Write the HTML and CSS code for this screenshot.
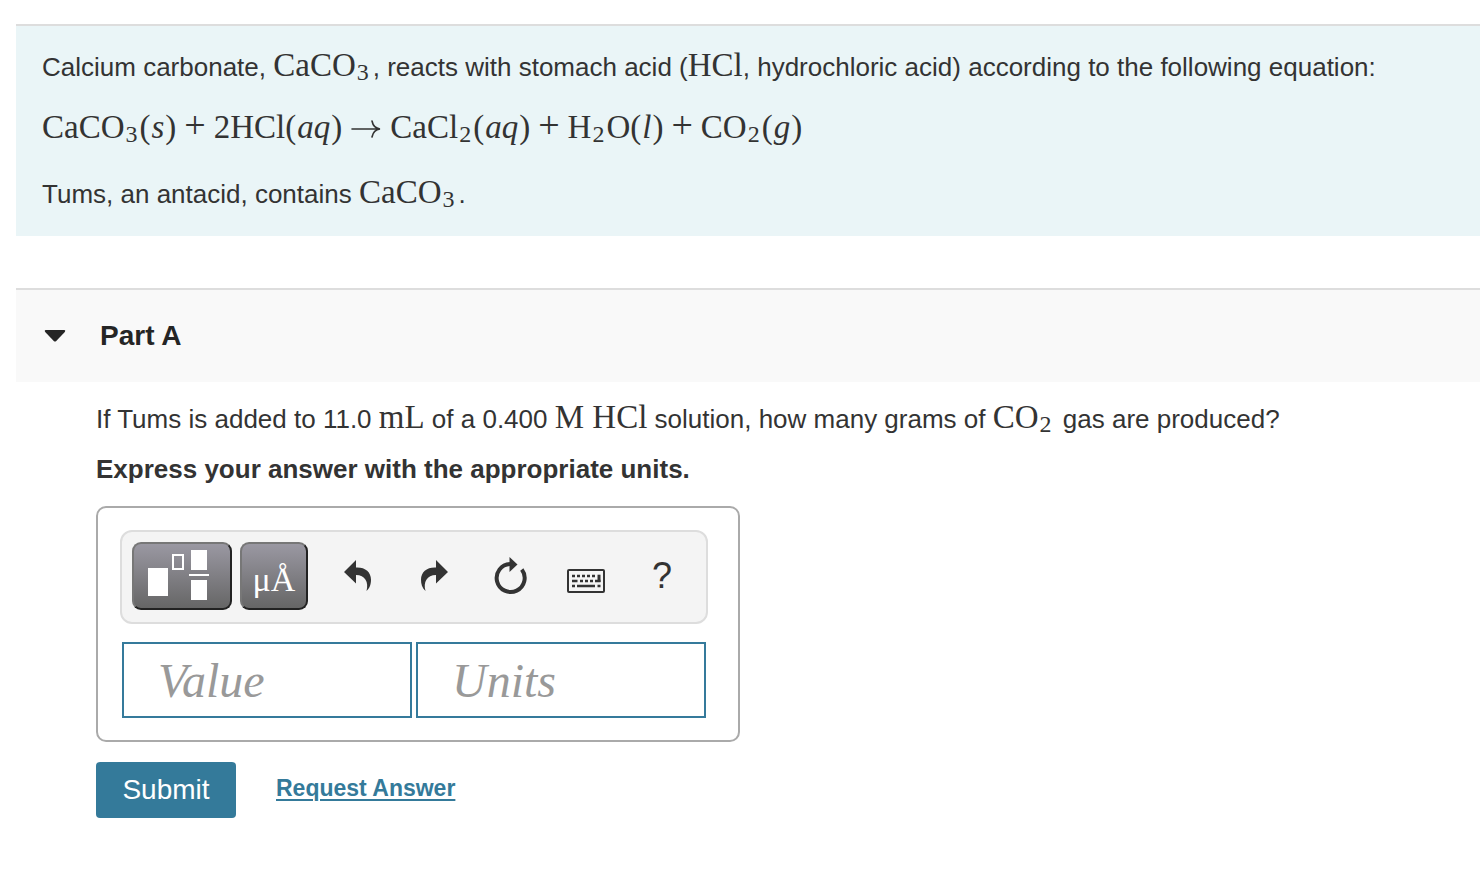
FILE: index.html
```
<!DOCTYPE html>
<html lang="en">
<head>
  <meta charset="UTF-8" />
  <meta name="viewport" content="width=device-width, initial-scale=1.0"/>
  <title>Calcium Carbonate and Stomach Acid</title>
  <link rel="stylesheet" href="styles.css">
</head>
<body>
  <section class="intro">
    <p>Calcium carbonate, <span class="math">CaCO<sub>3</sub></span>, reacts with stomach acid (<span class="math">HCl</span>, hydrochloric acid) according to the following equation:</p>
    <p class="equation math">CaCO<sub>3</sub>(<i>s</i>)<span class="op">+</span>2HCl(<i>aq</i>)<svg class="arrow" width="30" height="18" viewBox="0 0 30 18" fill="none" stroke="currentColor" stroke-width="1.600" stroke-linecap="round" aria-label="yields"><path d="M1 9H28M21 1C22 6 25 8.500 29 9C25 9.500 22 12 21 17"/></svg>CaCl<sub>2</sub>(<i>aq</i>)<span class="op">+</span>H<sub>2</sub>O(<i>l</i>)<span class="op">+</span>CO<sub>2</sub>(<i>g</i>)</p>
    <p>Tums, an antacid, contains <span class="math">CaCO<sub>3</sub></span>.</p>
  </section>

  <section class="part">
    <h2 class="part-header">
      <button type="button" class="part-toggle" aria-expanded="true">
        <svg width="22" height="12" viewBox="0 0 22 12" fill="currentColor"><path d="M1.500 0H20.500Q22 .5 20.800 2L12 11.200Q11 12 10 11.200L1.200 2Q0 .5 1.500 0Z"/></svg>
        Part A
      </button>
    </h2>

    <form class="part-body">
      <p class="question">If Tums is added to 11.0 <span class="math">mL</span> of a 0.400 <span class="math">M HCl</span> solution, how many grams of <span class="math">CO<sub>2</sub></span> gas are produced?</p>
      <p class="instructions">Express your answer with the appropriate units.</p>

      <div class="editor">
        <div class="toolbar">
          <button type="button" class="tool tool-dark tool-wide" aria-label="Templates">
            <svg width="64" height="52" viewBox="0 0 64 52" fill="#fff">
              <rect x="2" y="19" width="20" height="28"/>
              <rect x="27" y="6" width="10" height="14" fill="none" stroke="#fff" stroke-width="2"/>
              <rect x="45" y="1" width="16" height="20"/>
              <rect x="43" y="25" width="20" height="2"/>
              <rect x="45" y="31" width="16" height="20"/>
            </svg>
          </button>
          <button type="button" class="tool tool-dark tool-units" aria-label="Symbols">μÅ</button>
          <div class="tool-group">
            <button type="button" class="tool" aria-label="Undo">
              <svg width="28" height="32" viewBox="0 0 28 32" fill="currentColor"><path d="M0 12L12 0V7.500C21 7 27 12 27 19.500C27 24 26 28 22.500 31C25 22 21 15 12 15V23.500Z"/></svg>
            </button>
            <button type="button" class="tool" aria-label="Redo">
              <svg width="28" height="32" viewBox="0 0 28 32" fill="currentColor"><path d="M28 12L16 0V7.500C7 7 1 12 1 19.500C1 24 2 28 5.500 31C3 22 7 15 16 15V23.500Z"/></svg>
            </button>
            <button type="button" class="tool" aria-label="Reset">
              <svg width="34" height="38" viewBox="0 0 34 38" fill="none" stroke="currentColor" stroke-width="4"><path d="M28.800 12.500A14 14 0 1 1 17 7"/><path d="M16.500 0L24.500 7.500L16.500 15Z" fill="currentColor" stroke="none"/></svg>
            </button>
            <button type="button" class="tool" aria-label="Keyboard">
              <svg class="keyboard" width="40" height="24" viewBox="0 0 40 24" fill="none" stroke="currentColor">
                <rect x="2" y="1" width="36" height="22" rx="1" stroke-width="2"/>
                <path d="M6 7H9M11 7H14M16 7H19M21 7H24M26 7H29M6 12H11.500M14 12H17M19 12H22M24 12H27M29 12H34.500M6 17H9M11 17H29M31.500 17H34.500" stroke-width="2.600"/>
                <path d="M33 5.700V13" stroke-width="3"/>
              </svg>
            </button>
            <button type="button" class="tool tool-help" aria-label="Help">?</button>
          </div>
        </div>
        <div class="fields">
          <input type="text" placeholder="Value" aria-label="Value">
          <input type="text" placeholder="Units" aria-label="Units">
        </div>
      </div>

      <div class="actions">
        <button type="submit" class="submit">Submit</button>
        <a href="#" class="request">Request Answer</a>
      </div>
    </form>
  </section>
</body>
</html>
```
FILE: styles.css
```
* {
  box-sizing: border-box;
}

body {
  margin: 24px 0 0 16px;
  font-family: "Liberation Sans", Arial, sans-serif;
  font-size: 26px;
  line-height: 36px;
  color: #333;
  background-color: #fff;
}

p, h2 {
  margin: 0;
}

button, input {
  font-family: inherit;
}

.math {
  font-family: "Liberation Serif", "Times New Roman", serif;
  font-size: 33px;
  line-height: 1;
}

sub {
  margin: 0 4px 0 1px;
  font-size: 24px;
  line-height: 0;
  vertical-align: -4px;
}

/* problem statement */
.intro {
  display: flex;
  flex-direction: column;
  gap: 26px;
  padding: 23px 26px 24px;
  border-top: 2px solid #ddd;
  background-color: #eaf5f7;
}

.equation {
  padding-bottom: 6px;
}

.equation i {
  margin: 0 1px;
}

.equation sub {
  margin-right: 2px;
}

.op {
  margin: 0 8px;
  font-size: 38px;
  line-height: 0;
}

.arrow {
  margin: 0 9px;
}

/* part */
.part {
  margin-top: 52px;
}

.part-header {
  border-top: 2px solid #ddd;
  background-color: #f9f9f9;
}

.part-toggle {
  display: flex;
  align-items: center;
  gap: 34px;
  width: 100%;
  padding: 28px;
  border: 0;
  background: none;
  color: #252525;
  font-size: 28px;
  font-weight: bold;
  line-height: 36px;
}

.part-body {
  padding: 19px 24px 24px 80px;
}

.instructions {
  margin: 14px 0 19px;
  font-weight: bold;
}

.editor {
  max-width: 644px;
  padding: 22px 30px 22px 22px;
  border: 2px solid #aaa;
  border-radius: 10px;
}

.toolbar {
  display: flex;
  gap: 8px;
  padding: 10px 10px 12px;
  border: 2px solid #ddd;
  border-radius: 12px;
  background-color: #f4f4f4;
}

.tool-group {
  display: flex;
  gap: 8px;
  margin-left: 8px;
}

.tool {
  display: flex;
  align-items: center;
  justify-content: center;
  width: 68px;
  height: 68px;
  padding: 0;
  border: 0;
  background: none;
  color: #333;
}

.tool-dark {
  border: 2px solid;
  border-color: #777 #222 #222 #777;
  border-radius: 9px;
  background: linear-gradient(#9a98a2, #666);
  color: #fff;
}

.tool-wide {
  width: 100px;
  padding: 0 8px 2px 0;
}

.tool-units {
  padding-top: 8px;
  font-family: "Liberation Serif", serif;
  font-size: 34px;
}

.tool-help {
  font-size: 36px;
}

.keyboard {
  margin-top: 10px;
}

.fields {
  display: flex;
  gap: 4px;
  margin-top: 18px;
  padding: 0 2px;
}

.fields input {
  flex: 1;
  min-width: 0;
  height: 76px;
  padding: 0 34px;
  border: 2px solid #357a9b;
  font-family: "Liberation Serif", serif;
  font-size: 48px;
}

.fields input::placeholder {
  color: #999;
  font-style: italic;
}

.actions {
  display: flex;
  align-items: center;
  gap: 40px;
  margin-top: 20px;
}

.submit {
  width: 140px;
  height: 56px;
  border: 0;
  border-radius: 4px;
  background-color: #347a9a;
  color: #fff;
  font-size: 28px;
}

.request {
  padding-bottom: 4px;
  color: #347a9a;
  font-size: 23px;
  font-weight: bold;
  text-decoration-thickness: 2px;
  text-underline-offset: 3px;
}
```
